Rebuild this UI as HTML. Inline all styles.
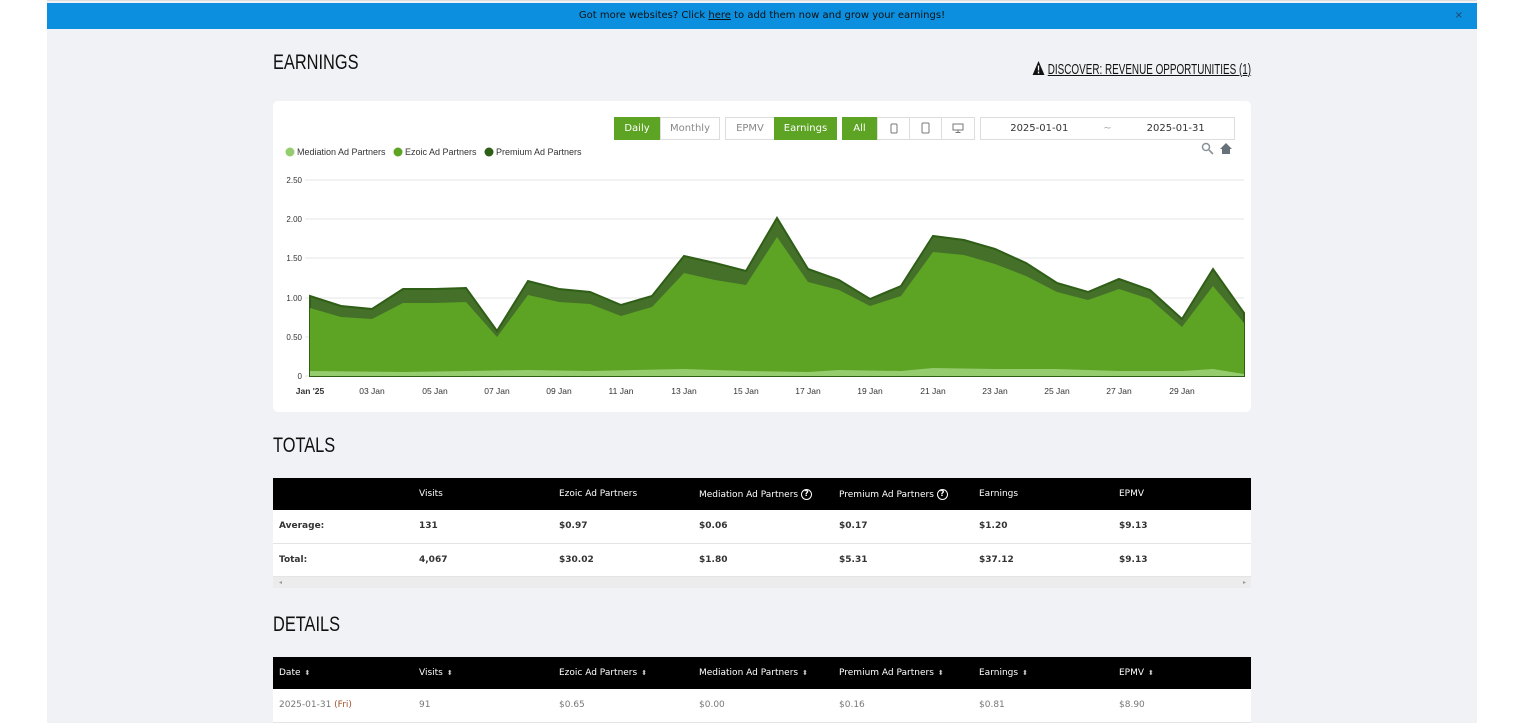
<!DOCTYPE html>
<html><head><meta charset="utf-8"><style>
*{box-sizing:border-box;margin:0;padding:0}
body{width:1524px;height:723px;overflow:hidden;background:#fff;font-family:"Liberation Sans",sans-serif;}
.wrap{position:absolute;left:47px;top:0;width:1430px;height:723px;background:#f1f2f6;border-top:1px solid #ddd}
.bar{position:absolute;left:0;top:2px;width:1430px;height:26px;background:#0b8fde;color:#111;font-size:10px;text-align:center;line-height:26px;font-family:"DejaVu Sans",sans-serif}
.bar u{color:#111}
.bar .x{position:absolute;right:14px;top:0;color:#246}
h2{position:absolute;font-family:"Liberation Sans",sans-serif;font-weight:normal;font-size:21px;color:#111;transform:scaleX(.78);transform-origin:left}
.disc{position:absolute;right:226px;top:59px;font-family:"Liberation Sans",sans-serif;font-size:15px;color:#111;transform:scaleX(.66);transform-origin:right;white-space:nowrap}
.card{position:absolute;left:226px;top:100px;width:978px;height:311px;background:#fff;border-radius:5px}
.btn{position:absolute;height:23px;border:1px solid #ddd;font-size:10px;line-height:21px;text-align:center;color:#888;background:#fff;font-family:"DejaVu Sans",sans-serif}
.btn svg{vertical-align:middle}
.g{background:#5da324;color:#fff;border-color:#5da324}
table{position:absolute;left:226px;width:978px;border-collapse:collapse;font-family:"DejaVu Sans",sans-serif;font-size:9px}
th{background:#000;color:#fff;text-align:left;font-weight:normal;padding-left:6px;height:32px}
td{background:#fff;padding-left:6px;height:33px;border-bottom:1px solid #e4e4e4;color:#333}
.tot td{font-weight:bold}
.det td{color:#777}
.q{display:inline-block;width:11px;height:11px;border:1.5px solid #fff;border-radius:50%;font-size:8px;line-height:8px;text-align:center;font-weight:bold;vertical-align:middle}
.s{font-size:7px;color:#ccc;margin-left:4px}
</style></head><body>
<div class="wrap">
<div class="bar">Got more websites? Click <u>here</u> to add them now and grow your earnings!<span class="x">×</span></div>
<h2 style="left:226px;top:50px">EARNINGS</h2>
<div class="disc"><svg width="20" height="16" viewBox="0 0 20 16" style="vertical-align:-2px;margin-right:4px"><path d="M10 1 L19 15 H1Z" fill="#111"/><rect x="9" y="5.5" width="2" height="5" fill="#fff"/><rect x="9" y="11.5" width="2" height="2" fill="#fff"/></svg><span style="text-decoration:underline">DISCOVER: REVENUE OPPORTUNITIES (1)</span></div>
<div class="card">
 <div class="btn g" style="left:341px;top:16px;width:46px">Daily</div>
 <div class="btn" style="left:387px;top:16px;width:60px">Monthly</div>
 <div class="btn" style="left:452px;top:16px;width:50px">EPMV</div>
 <div class="btn g" style="left:501px;top:16px;width:63px">Earnings</div>
 <div class="btn g" style="left:569px;top:16px;width:35px">All</div>
 <div class="btn" style="left:604px;top:16px;width:33px"><svg width="8" height="11"><rect x="1" y="1" width="6" height="9" rx="1" fill="none" stroke="#777"/></svg></div>
 <div class="btn" style="left:636px;top:16px;width:33px"><svg width="9" height="12"><rect x="1" y="1" width="7" height="10" rx="1" fill="none" stroke="#777"/></svg></div>
 <div class="btn" style="left:668px;top:16px;width:34px"><svg width="12" height="11"><rect x="1" y="1" width="10" height="6" fill="none" stroke="#777"/><line x1="6" y1="7" x2="6" y2="9.5" stroke="#777"/><line x1="3.5" y1="9.5" x2="8.5" y2="9.5" stroke="#777"/></svg></div>
 <div class="btn" style="left:707px;top:16px;width:255px;color:#333;word-spacing:0">2025-01-01&nbsp;&nbsp;&nbsp;&nbsp;&nbsp;&nbsp;&nbsp;&nbsp;&nbsp;&nbsp;&nbsp;<span style="color:#aaa">~</span>&nbsp;&nbsp;&nbsp;&nbsp;&nbsp;&nbsp;&nbsp;&nbsp;&nbsp;&nbsp;&nbsp;2025-01-31</div>
</div>
<svg style="position:absolute;left:0;top:0" width="1430" height="723" font-family="Liberation Sans,sans-serif" font-size="9">
<g transform="translate(-47,0)">
<circle cx="290" cy="151" r="4.5" fill="#95cc6e"/><text x="297" y="154" fill="#333">Mediation Ad Partners</text>
<circle cx="398" cy="151" r="4.5" fill="#5da324"/><text x="405" y="154" fill="#333">Ezoic Ad Partners</text>
<circle cx="489" cy="151" r="4.5" fill="#2f5e16"/><text x="496" y="154" fill="#333">Premium Ad Partners</text>
<circle cx="1206" cy="146" r="3.5" fill="none" stroke="#8a9199" stroke-width="1.5"/><line x1="1209" y1="149" x2="1213" y2="153" stroke="#8a9199" stroke-width="1.6"/>
<path d="M1220 148 L1226 142 L1232 148 H1230 V153 H1222 V148Z" fill="#68717a"/>
<g stroke="#e6e6e6"><line x1="305" y1="179" x2="1244" y2="179"/><line x1="305" y1="218" x2="1244" y2="218"/><line x1="305" y1="257" x2="1244" y2="257"/><line x1="305" y1="297" x2="1244" y2="297"/><line x1="305" y1="336" x2="1244" y2="336"/><line x1="305" y1="375" x2="1244" y2="375"/></g>
<g fill="#333" font-size="8" text-anchor="end"><text x="302" y="182">2.50</text><text x="302" y="221">2.00</text><text x="302" y="260">1.50</text><text x="302" y="300">1.00</text><text x="302" y="339">0.50</text><text x="302" y="378">0</text></g>
<path d="M310 375 L310 295 L341 305 L372 308 L403 288 L435 288 L466 287 L497 330 L528 280 L559 288 L590 291 L621 304 L652 295 L684 255 L715 262 L746 270 L777 217 L808 268 L839 279 L870 298 L901 285 L933 235 L964 239 L995 248 L1026 262 L1057 282 L1088 291 L1119 278 L1150 289 L1182 318 L1213 268 L1244 312 L1244 375Z" fill="#44702a" stroke="#2f5e16" stroke-width="2"/>
<path d="M310 375 L310 307 L341 316 L372 318 L403 302 L435 302 L466 301 L497 336 L528 294 L559 301 L590 303 L621 315 L652 306 L684 272 L715 279 L746 284 L777 236 L808 281 L839 289 L870 305 L901 295 L933 251 L964 254 L995 263 L1026 275 L1057 291 L1088 299 L1119 288 L1150 298 L1182 326 L1213 285 L1244 322 L1244 375Z" fill="#5da324"/>
<path d="M310 375 L310 370 L403 371 L466 370 L528 369 L590 370 L684 368 L746 370 L808 371 L839 369 L901 370 L933 367 L995 368 L1057 368 L1119 370 L1182 370 L1213 368 L1244 373 L1244 375Z" fill="#95cc6e"/>
<g fill="#333" font-size="8.5" text-anchor="middle"><text x="310" y="393" font-weight="bold">Jan '25</text><text x="372" y="393">03 Jan</text><text x="435" y="393">05 Jan</text><text x="497" y="393">07 Jan</text><text x="559" y="393">09 Jan</text><text x="621" y="393">11 Jan</text><text x="684" y="393">13 Jan</text><text x="746" y="393">15 Jan</text><text x="808" y="393">17 Jan</text><text x="870" y="393">19 Jan</text><text x="933" y="393">21 Jan</text><text x="995" y="393">23 Jan</text><text x="1057" y="393">25 Jan</text><text x="1119" y="393">27 Jan</text><text x="1182" y="393">29 Jan</text></g>
</g></svg>
<h2 style="left:226px;top:433px">TOTALS</h2>
<table class="tot" style="top:477px">
<tr><th style="width:140px"></th><th style="width:140px">Visits</th><th style="width:140px">Ezoic Ad Partners</th><th style="width:140px">Mediation Ad Partners <span class="q">?</span></th><th style="width:140px">Premium Ad Partners <span class="q">?</span></th><th style="width:140px">Earnings</th><th>EPMV</th></tr>
<tr><td>Average:</td><td>131</td><td>$0.97</td><td>$0.06</td><td>$0.17</td><td>$1.20</td><td>$9.13</td></tr>
<tr><td>Total:</td><td>4,067</td><td>$30.02</td><td>$1.80</td><td>$5.31</td><td>$37.12</td><td>$9.13</td></tr>
<tr><td colspan="7" style="height:12px;background:#ececec;font-size:6px;color:#999;border:0">◂<span style="float:right;margin-right:5px">▸</span></td></tr>
</table>
<h2 style="left:226px;top:612px">DETAILS</h2>
<table class="det" style="top:656px">
<tr><th style="width:140px">Date<span class="s">⬍</span></th><th style="width:140px">Visits<span class="s">⬍</span></th><th style="width:140px">Ezoic Ad Partners<span class="s">⬍</span></th><th style="width:140px">Mediation Ad Partners<span class="s">⬍</span></th><th style="width:140px">Premium Ad Partners<span class="s">⬍</span></th><th style="width:140px">Earnings<span class="s">⬍</span></th><th>EPMV<span class="s">⬍</span></th></tr>
<tr><td>2025-01-31 <span style="color:#a0522d">(Fri)</span></td><td>91</td><td>$0.65</td><td>$0.00</td><td>$0.16</td><td>$0.81</td><td>$8.90</td></tr>
</table>
</div>
</body></html>
